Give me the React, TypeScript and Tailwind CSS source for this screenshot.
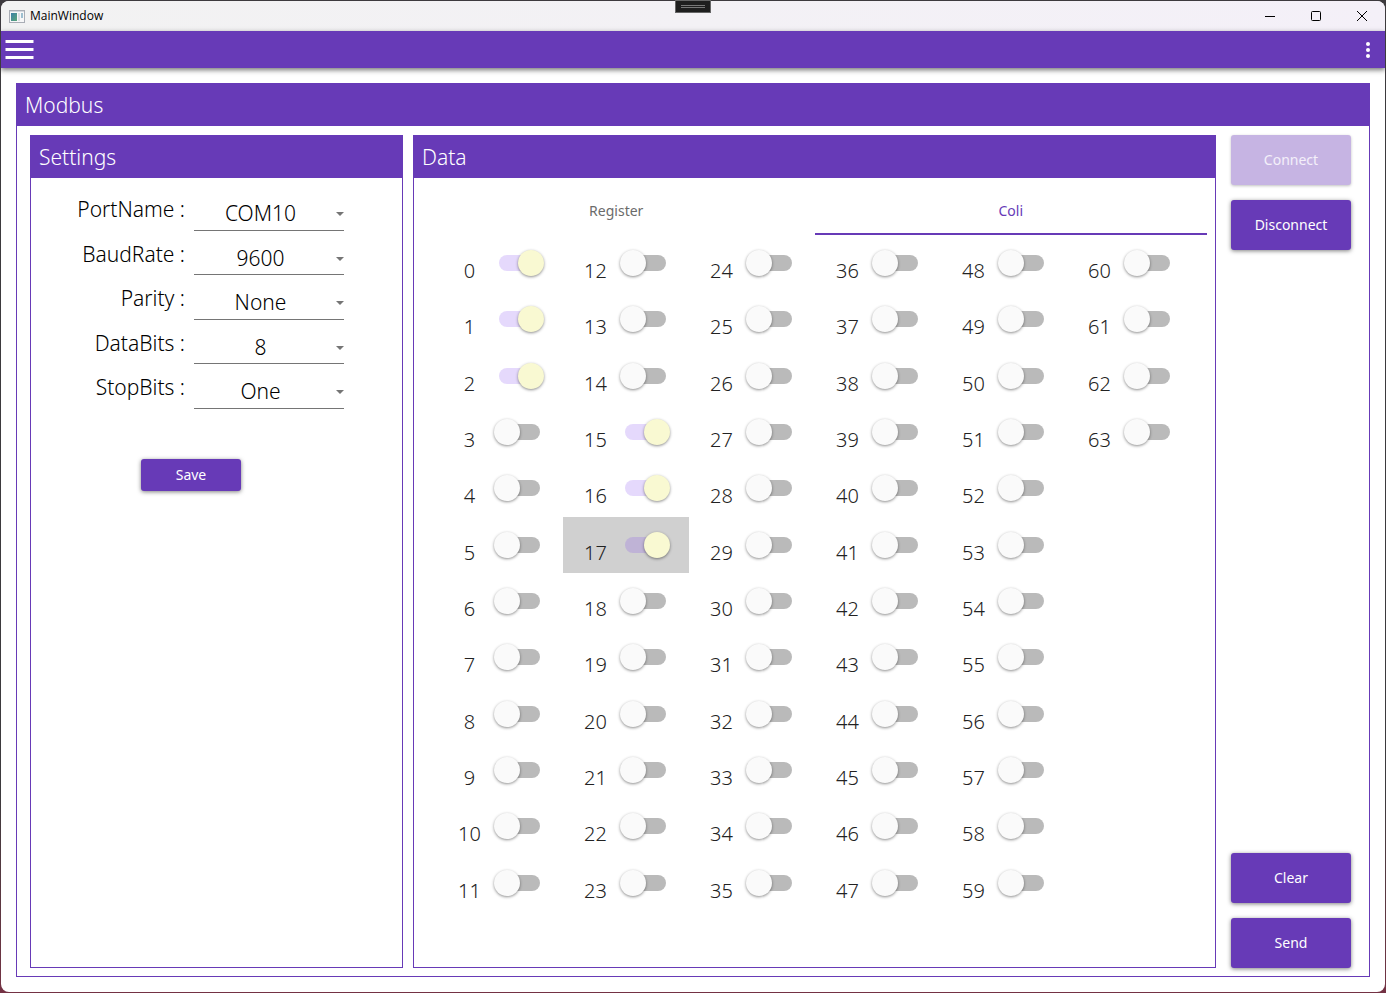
import { useState } from 'react';
import type { ReactNode } from 'react';

const settings = [
  { id: 'port', label: 'PortName', options: ['COM10', 'COM1', 'COM2'] },
  { id: 'baud', label: 'BaudRate', options: ['9600', '19200', '115200'] },
  { id: 'parity', label: 'Parity', options: ['None', 'Odd', 'Even'] },
  { id: 'data', label: 'DataBits', options: ['8', '7'] },
  { id: 'stop', label: 'StopBits', options: ['One', 'Two'] },
];

const raised = 'rounded-[3px] bg-[#673ab7] text-sm text-white shadow-[0_1px_4px_rgba(0,0,0,0.5)]';

function Panel({ title, className, children }: { title: string; className: string; children: ReactNode }) {
  return (
    <section className={`flex flex-col border border-[#673ab7] ${className}`}>
      <h2 className="flex h-[42px] shrink-0 items-center bg-[#673ab7] px-2 pt-px text-[21px] font-light text-white">{title}</h2>
      {children}
    </section>
  );
}

function TitleBar() {
  return (
    <header className="flex h-[30px] shrink-0 items-center bg-gradient-to-r from-[#f2f2f2] to-[#f4f0f8]">
      <svg className="ml-2 h-[13px] w-4" viewBox="0 0 16 13">
        <defs>
          <linearGradient id="pane" x1="0" y1="0" x2="1" y2="1">
            <stop offset="0" stopColor="#3c7fa8" />
            <stop offset="1" stopColor="#5aa678" />
          </linearGradient>
        </defs>
        <rect x="0.5" y="0.5" width="15" height="12" fill="#f7f7f8" stroke="#a9adb5" />
        <rect x="2" y="3" width="6" height="8" fill="url(#pane)" />
        <rect x="9" y="3" width="2" height="8" fill="#dcdfe4" />
        <rect x="12" y="3" width="2" height="5" fill="#9ebfd0" />
        <rect x="1" y="1" width="14" height="1" fill="#d3d7de" />
      </svg>
      <h1 className="ml-[5px] flex-1 font-['Open_Sans','Noto_Sans',sans-serif] text-xs text-black">MainWindow</h1>
      <button aria-label="Minimize" className="flex h-full w-[46px] items-center justify-center">
        <svg width="10" height="10" viewBox="0 0 10 10"><path d="M0 5.5h10" stroke="#000" /></svg>
      </button>
      <button aria-label="Maximize" className="flex h-full w-[46px] items-center justify-center">
        <svg width="10" height="10" viewBox="0 0 10 10"><rect x="0.5" y="0.5" width="9" height="9" rx="1" fill="none" stroke="#000" /></svg>
      </button>
      <button aria-label="Close" className="flex h-full w-[46px] items-center justify-center">
        <svg width="10" height="10" viewBox="0 0 10 10"><path d="M0 0l10 10M10 0L0 10" stroke="#000" /></svg>
      </button>
    </header>
  );
}

export default function App() {
  const [on, setOn] = useState<number[]>([0, 1, 2, 15, 16, 17]);
  const [selected, setSelected] = useState(17);

  const toggle = (n: number) => {
    setSelected(n);
    setOn(on.includes(n) ? on.filter((v) => v !== n) : [...on, n]);
  };

  return (
    <div className="relative flex h-screen min-h-[900px] flex-col bg-gradient-to-b from-[#3d3a3e] from-80% to-[#743244] p-px font-['Noto_Sans',sans-serif]">
      <div className="flex flex-1 flex-col overflow-hidden rounded-lg bg-white">
        <TitleBar />
        <nav className="flex h-[37px] shrink-0 items-center justify-between bg-[#673ab7] pl-1 pr-[10px] shadow-[0_2px_5px_rgba(0,0,0,0.55)]">
          <button aria-label="Menu">
            <svg width="29" height="19" viewBox="0 0 29 19"><path d="M0.5 1.5h28M0.5 9.5h28M0.5 17.5h28" stroke="#fff" strokeWidth="3" /></svg>
          </button>
          <button aria-label="More" className="px-[5px]">
            <svg width="4" height="16" viewBox="0 0 4 16" fill="#fff"><circle cx="2" cy="2" r="2" /><circle cx="2" cy="8" r="2" /><circle cx="2" cy="14" r="2" /></svg>
          </button>
        </nav>
        <main className="flex min-h-0 flex-1 p-[15px]">
          <Panel title="Modbus" className="min-h-0 flex-1">
            <div className="flex min-h-0 flex-1 pb-2 pl-[13px] pr-[18px] pt-[9px]">
              <Panel title="Settings" className="w-[373px] shrink-0">
                <form className="flex flex-col pt-2" onSubmit={(e) => e.preventDefault()}>
                  <div className="grid h-[223px] grid-rows-5">
                    {settings.map((s) => (
                      <div key={s.id} className="flex">
                        <label htmlFor={s.id} className="w-[154px] pt-2 text-right text-[21px] font-light text-black">{s.label} :</label>
                        <div className="relative ml-[9px] flex w-[150px] border-b border-[#757575]">
                          <select id={s.id} className="w-full appearance-none bg-transparent pr-[17px] pt-3 text-center text-[21px] font-light text-black">
                            {s.options.map((o) => <option key={o}>{o}</option>)}
                          </select>
                          <svg className="pointer-events-none absolute right-0 top-[26px]" width="8" height="4" viewBox="0 0 8 4"><path d="M0 0h8L4 4z" fill="#757575" /></svg>
                        </div>
                      </div>
                    ))}
                  </div>
                  <button className={`ml-[110px] mt-[50px] h-8 w-[100px] ${raised}`}>Save</button>
                </form>
              </Panel>
              <Panel title="Data" className="ml-[10px] flex-1">
                <div role="tablist" className="mx-2 grid h-[57px] shrink-0 grid-cols-2 text-sm">
                  <button role="tab" aria-selected="false" className="pr-1 pt-2 text-[#6b6b6b]">Register</button>
                  <button role="tab" aria-selected="true" className="border-b-2 border-[#673ab7] pt-[10px] text-[#673ab7]">Coli</button>
                </div>
                <div className="flex min-h-0 flex-1 justify-center pb-14">
                  <div className="grid grid-flow-col auto-cols-[126px] grid-rows-12">
                    {Array.from({ length: 64 }, (_, n) => (
                      <label key={n} className={`flex items-center ${n === selected ? 'bg-[#d0d0d0]' : ''}`}>
                        <span className="w-[66px] pt-4 text-center text-xl font-light text-[#222]">{n}</span>
                        <input
                          type="checkbox"
                          role="switch"
                          checked={on.includes(n)}
                          onChange={() => toggle(n)}
                          className="-ml-1 flex h-4 w-[41px] appearance-none items-center rounded-full bg-[#bababa] before:-ml-[5px] before:size-[26px] before:shrink-0 before:rounded-full before:bg-[#fafafa] before:shadow-[0_1px_3px_rgba(0,0,0,0.45)] before:content-[''] checked:bg-[#7b3ff0]/20 checked:before:ml-[19px] checked:before:bg-[#f9f9d2]"
                        />
                      </label>
                    ))}
                  </div>
                </div>
              </Panel>
              <div className="ml-[15px] flex w-[120px] shrink-0 flex-col gap-[15px]">
                <button disabled className="h-[50px] rounded-[3px] bg-[#c6b4e3] text-sm text-white/80 shadow-[0_1px_3px_rgba(0,0,0,0.25)]">Connect</button>
                <button className={`h-[50px] ${raised}`}>Disconnect</button>
                <button className={`mt-auto h-[50px] ${raised}`}>Clear</button>
                <button className={`h-[50px] ${raised}`}>Send</button>
              </div>
            </div>
          </Panel>
        </main>
      </div>
      <div className="absolute left-1/2 top-0 flex h-[13px] w-9 -translate-x-1/2 flex-col items-center justify-center gap-px border border-[#666] bg-[#1e1e1e]">
        <span className="h-px w-6 bg-[#777]" />
        <span className="h-px w-6 bg-[#777]" />
      </div>
    </div>
  );
}
